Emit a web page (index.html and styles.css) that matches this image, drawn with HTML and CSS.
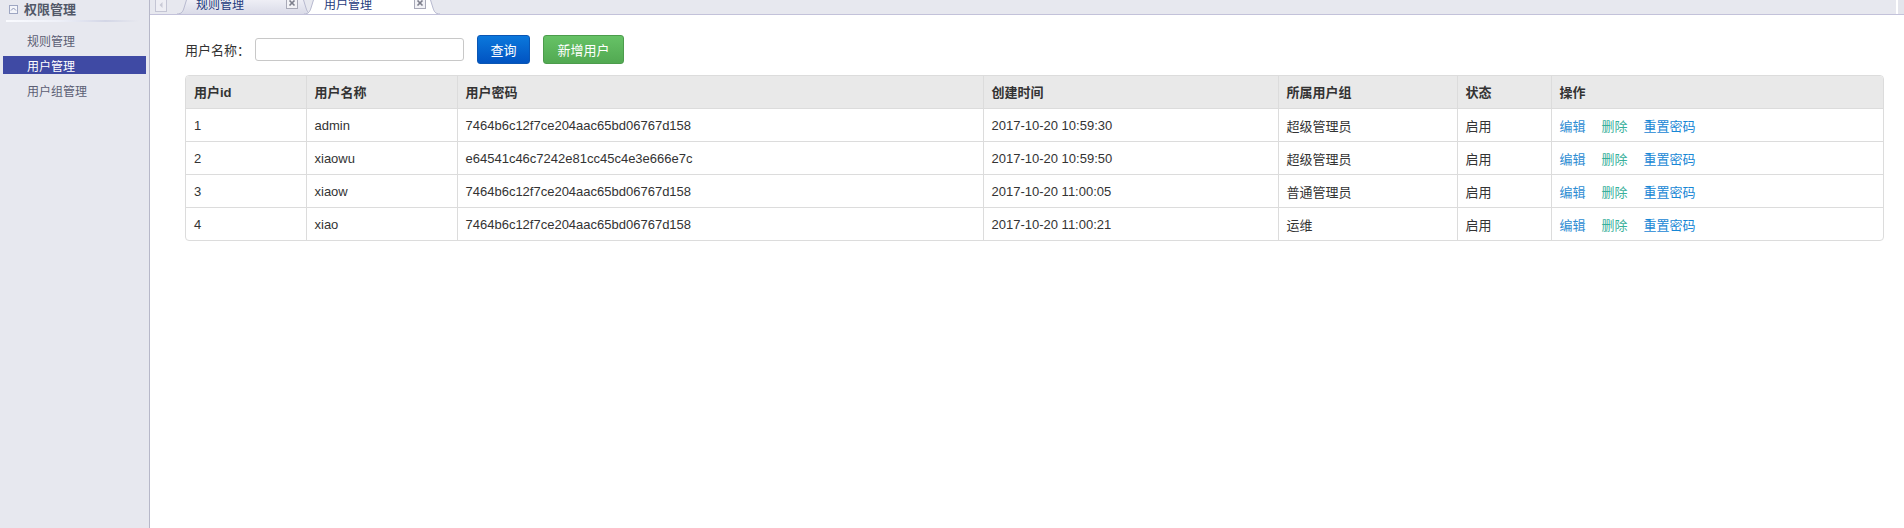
FILE: index.html
```html
<!DOCTYPE html>
<html lang="zh-CN">
<head>
<meta charset="utf-8">
<title>用户管理</title>
<link rel="stylesheet" href="styles.css">
</head>
<body>
<div class="layout">
  <aside class="sidebar">
    <div class="side-head">
      <span class="side-icon">
        <svg width="9" height="9" viewBox="0 0 9 9"><rect x="0.5" y="0.5" width="8" height="8" fill="#f4f5fa" stroke="#9ea6c2"/><path d="M2 5.5 L4.5 3 L7 5.5" fill="none" stroke="#8a93b4" stroke-width="1"/></svg>
      </span>
      <span class="side-title">权限管理</span>
    </div>
    <div class="side-rule"></div>
    <ul class="side-menu">
      <li class="side-item">规则管理</li>
      <li class="side-item active">用户管理</li>
      <li class="side-item">用户组管理</li>
    </ul>
  </aside>

  <main class="main">
    <div class="tabbar">
      <span class="scroll-btn">
        <svg width="12" height="22" viewBox="0 0 12 22"><rect x="0.5" y="0.5" width="11" height="21" fill="#eeeef4" stroke="#c4c5d4"/><path d="M7.5 12 L4.5 15 L7.5 18 Z" fill="#c9cad6"/></svg>
      </span>
      <div class="tab">
        <svg class="tab-shape" width="136" height="24" viewBox="0 0 136 24">
          <defs><linearGradient id="tabg" x1="0" y1="0" x2="0" y2="1"><stop offset="0" stop-color="#fbfbfe"/><stop offset="1" stop-color="#dadbe8"/></linearGradient></defs>
          <path d="M0 24 C5 24 6 21 7 18 L11 5 C12 2 14 1 17 1 L119 1 C122 1 124 2 125 5 L129 18 C130 21 131 24 136 24" fill="url(#tabg)" stroke="#b7b9cf"/>
        </svg>
        <span class="tab-text">规则管理</span>
        <span class="tab-close">
          <svg width="12" height="12" viewBox="0 0 12 12"><rect x="0.5" y="0.5" width="11" height="11" fill="#f2f2f6" stroke="#a9aab8"/><path d="M3.5 3.5 L8.5 8.5 M8.5 3.5 L3.5 8.5" stroke="#7d7f8c" stroke-width="1.6"/></svg>
        </span>
      </div>
      <div class="tab tab-active">
        <svg class="tab-shape" width="136" height="24" viewBox="0 0 136 24">
          <path d="M0 24 C5 24 6 21 7 18 L11 5 C12 2 14 1 17 1 L119 1 C122 1 124 2 125 5 L129 18 C130 21 131 24 136 24" fill="#ffffff" stroke="#b7b9cf"/>
        </svg>
        <span class="tab-text">用户管理</span>
        <span class="tab-close">
          <svg width="12" height="12" viewBox="0 0 12 12"><rect x="0.5" y="0.5" width="11" height="11" fill="#f2f2f6" stroke="#a9aab8"/><path d="M3.5 3.5 L8.5 8.5 M8.5 3.5 L3.5 8.5" stroke="#7d7f8c" stroke-width="1.6"/></svg>
        </span>
      </div>
      <span class="scroll-btn-right"></span>
    </div>

    <section class="content">
      <form class="toolbar">
        <label class="field-label" for="uname">用户名称：</label>
        <input class="field-input" id="uname" type="text">
        <button type="button" class="btn btn-blue">查询</button>
        <button type="button" class="btn btn-green">新增用户</button>
      </form>

      <div class="table-wrap">
        <table class="grid">
          <colgroup>
            <col class="c-id"><col class="c-name"><col class="c-pwd"><col class="c-time"><col class="c-group"><col class="c-state"><col>
          </colgroup>
          <thead>
            <tr><th>用户id</th><th>用户名称</th><th>用户密码</th><th>创建时间</th><th>所属用户组</th><th>状态</th><th>操作</th></tr>
          </thead>
          <tbody>
            <tr><td>1</td><td>admin</td><td>7464b6c12f7ce204aac65bd06767d158</td><td>2017-10-20 10:59:30</td><td>超级管理员</td><td>启用</td>
              <td><a class="op op-edit">编辑</a><a class="op op-del">删除</a><a class="op op-reset">重置密码</a></td></tr>
            <tr><td>2</td><td>xiaowu</td><td>e64541c46c7242e81cc45c4e3e666e7c</td><td>2017-10-20 10:59:50</td><td>超级管理员</td><td>启用</td>
              <td><a class="op op-edit">编辑</a><a class="op op-del">删除</a><a class="op op-reset">重置密码</a></td></tr>
            <tr><td>3</td><td>xiaow</td><td>7464b6c12f7ce204aac65bd06767d158</td><td>2017-10-20 11:00:05</td><td>普通管理员</td><td>启用</td>
              <td><a class="op op-edit">编辑</a><a class="op op-del">删除</a><a class="op op-reset">重置密码</a></td></tr>
            <tr><td>4</td><td>xiao</td><td>7464b6c12f7ce204aac65bd06767d158</td><td>2017-10-20 11:00:21</td><td>运维</td><td>启用</td>
              <td><a class="op op-edit">编辑</a><a class="op op-del">删除</a><a class="op op-reset">重置密码</a></td></tr>
          </tbody>
        </table>
      </div>
    </section>
  </main>
</div>
</body>
</html>
```

FILE: styles.css
```css
* { box-sizing: border-box; }

html, body {
  margin: 0;
  padding: 0;
  height: 100%;
}

body {
  font-family: "Liberation Sans", "Noto Sans CJK SC", sans-serif;
  font-size: 13px;
  color: #333;
  background: #fff;
  overflow: hidden;
}

.layout {
  display: flex;
  height: 100vh;
}

/* ---- left navigation ---- */
.sidebar {
  width: 150px;
  flex: none;
  background: #e7e8ef;
  border-right: 1px solid #b7b8c9;
}

.side-head {
  display: flex;
  align-items: center;
  height: 20px;
  padding-left: 9px;
}

.side-icon {
  display: flex;
  width: 9px;
  height: 9px;
  margin-right: 6px;
  margin-top: -1px;
}

.side-title {
  font-size: 13px;
  font-weight: bold;
  color: #525868;
  line-height: 18px;
}

.side-rule {
  height: 2px;
  margin: 0 10px 0 6px;
  background: linear-gradient(to right, #fafbff 0%, #eef0f8 40%, #d3d6e6 75%, rgba(231, 232, 239, 0) 100%);
}

.side-menu {
  list-style: none;
  margin: 9px 0 0;
  padding: 0;
}

.side-item {
  height: 18px;
  margin: 0 3px 7px 3px;
  padding: 4px 0 0 24px;
  font-size: 12px;
  line-height: 14px;
  color: #5b5e74;
}

.side-item.active {
  background: #3f4aa4;
  color: #fff;
}

/* ---- tab strip ---- */
.main {
  flex: 1;
  display: flex;
  flex-direction: column;
  min-width: 0;
}

.tabbar {
  display: flex;
  align-items: flex-start;
  height: 15px;
  background: #e7e8ef;
  border-bottom: 1px solid #c3c2da;
  overflow: hidden;
}

.scroll-btn {
  display: flex;
  margin: -10px 0 0 5px;
  width: 12px;
  height: 22px;
}

.tab {
  position: relative;
  width: 136px;
  height: 24px;
  margin-top: -10px;
  flex: none;
}

.scroll-btn + .tab {
  margin-left: 10px;
}

.tab-active {
  margin-left: -9px;
  z-index: 1;
}

.tab-shape {
  position: absolute;
  left: 0;
  top: 0;
}

.tab-text {
  position: absolute;
  left: 19px;
  top: 8px;
  font-size: 12px;
  line-height: 14px;
  color: #1e3a7c;
}

.tab-active .tab-text {
  left: 20px;
}

.tab-close {
  position: absolute;
  left: 109px;
  top: 7px;
  display: flex;
}

.tab-active .tab-close {
  left: 110px;
}

.scroll-btn-right {
  margin-left: auto;
  width: 8px;
  height: 14px;
  background: #e4e5ec;
  border-left: 2px solid #fff;
}

/* ---- content ---- */
.content {
  flex: 1;
  padding: 20px 20px 0 35px;
}

.toolbar {
  display: flex;
  align-items: center;
  height: 29px;
  margin: 0 0 11px;
}

.field-label {
  font-size: 13px;
  color: #333;
  margin-right: 5px;
}

.field-input {
  width: 209px;
  height: 23px;
  border: 1px solid #c8c8c8;
  border-radius: 3px;
  margin: 0 13px 0 0;
  padding: 0 6px;
  font: inherit;
}

.btn {
  height: 29px;
  padding: 0;
  border-radius: 3px;
  color: #fff;
  font-family: "Liberation Sans", "Noto Sans CJK SC", sans-serif;
  font-size: 13px;
  cursor: pointer;
}

.btn-blue {
  width: 53px;
  background: linear-gradient(to bottom, #0b78dc, #0153c1);
  border: 1px solid #0a56b4;
  margin-right: 13px;
}

.btn-green {
  width: 81px;
  background: linear-gradient(to bottom, #66c266, #52a952);
  border: 1px solid #4c9c4c;
}

.table-wrap {
  border: 1px solid #dcdcdc;
  border-radius: 4px;
  overflow: hidden;
}

.grid {
  width: 100%;
  border-collapse: collapse;
  table-layout: fixed;
}

.c-id { width: 120px; }
.c-name { width: 151px; }
.c-pwd { width: 526px; }
.c-time { width: 295px; }
.c-group { width: 179px; }
.c-state { width: 94px; }

.grid th,
.grid td {
  height: 33px;
  padding: 0 8px;
  text-align: left;
  font-size: 13px;
  border-left: 1px solid #dcdcdc;
  border-top: 1px solid #dcdcdc;
  white-space: nowrap;
}

.grid th:first-child,
.grid td:first-child {
  border-left: none;
}

.grid thead th {
  border-top: none;
  height: 32px;
  background: #e9e9e9;
  font-weight: bold;
  color: #333;
}

.grid td {
  color: #333;
  padding-top: 1px;
}

.op {
  margin-right: 16px;
  cursor: pointer;
}

.op-edit { color: #2e8dd3; }
.op-del { color: #38b09a; }
.op-reset { color: #1787d5; }
```
